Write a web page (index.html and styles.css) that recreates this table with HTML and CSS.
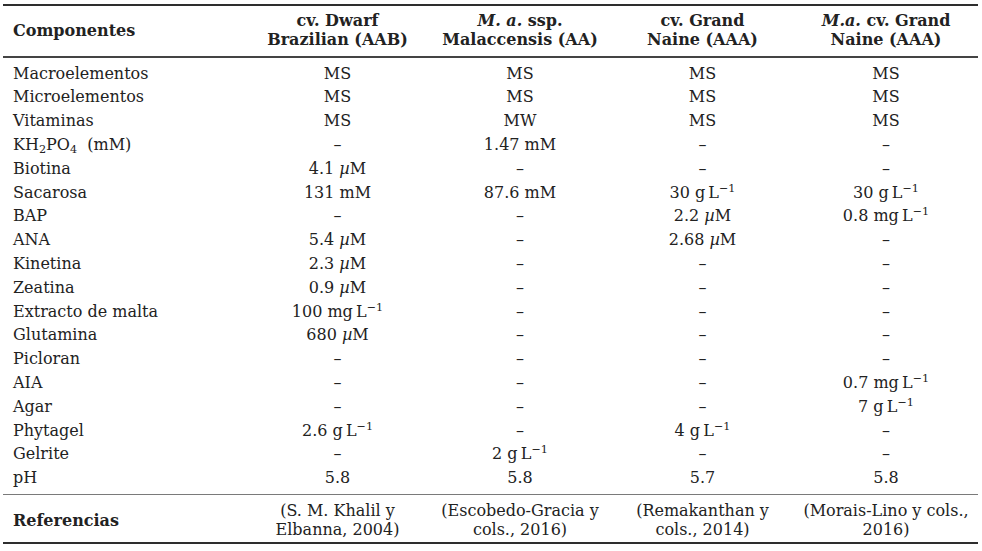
FILE: index.html
```html
<!DOCTYPE html>
<html lang="es">
<head>
<meta charset="utf-8">
<title>Componentes</title>
<link rel="stylesheet" href="styles.css">
</head>
<body>
<table class="tbl">
  <colgroup>
    <col class="c0"><col class="c1"><col class="c2"><col class="c3"><col class="c4">
  </colgroup>
  <thead>
    <tr>
      <th class="lbl">Componentes</th>
      <th>cv. Dwarf<br>Brazilian (AAB)</th>
      <th><i>M. a.</i> ssp.<br>Malaccensis (AA)</th>
      <th>cv. Grand<br>Naine (AAA)</th>
      <th><i>M.a.</i> cv. Grand<br>Naine (AAA)</th>
    </tr>
  </thead>
  <tbody>
    <tr class="first"><td class="lbl">Macroelementos</td><td>MS</td><td>MS</td><td>MS</td><td>MS</td></tr>
    <tr><td class="lbl">Microelementos</td><td>MS</td><td>MS</td><td>MS</td><td>MS</td></tr>
    <tr><td class="lbl">Vitaminas</td><td>MS</td><td>MW</td><td>MS</td><td>MS</td></tr>
    <tr><td class="lbl">KH<sub>2</sub>PO<sub>4</sub>&nbsp; (mM)</td><td>–</td><td>1.47 mM</td><td>–</td><td>–</td></tr>
    <tr><td class="lbl">Biotina</td><td>4.1 <i>µ</i>M</td><td>–</td><td>–</td><td>–</td></tr>
    <tr><td class="lbl">Sacarosa</td><td>131 mM</td><td>87.6 mM</td><td>30 g&#8201;L<sup>−1</sup></td><td>30 g&#8201;L<sup>−1</sup></td></tr>
    <tr><td class="lbl">BAP</td><td>–</td><td>–</td><td>2.2 <i>µ</i>M</td><td>0.8 mg&#8201;L<sup>−1</sup></td></tr>
    <tr><td class="lbl">ANA</td><td>5.4 <i>µ</i>M</td><td>–</td><td>2.68 <i>µ</i>M</td><td>–</td></tr>
    <tr><td class="lbl">Kinetina</td><td>2.3 <i>µ</i>M</td><td>–</td><td>–</td><td>–</td></tr>
    <tr><td class="lbl">Zeatina</td><td>0.9 <i>µ</i>M</td><td>–</td><td>–</td><td>–</td></tr>
    <tr><td class="lbl">Extracto de malta</td><td>100 mg&#8201;L<sup>−1</sup></td><td>–</td><td>–</td><td>–</td></tr>
    <tr><td class="lbl">Glutamina</td><td>680 <i>µ</i>M</td><td>–</td><td>–</td><td>–</td></tr>
    <tr><td class="lbl">Picloran</td><td>–</td><td>–</td><td>–</td><td>–</td></tr>
    <tr><td class="lbl">AIA</td><td>–</td><td>–</td><td>–</td><td>0.7 mg&#8201;L<sup>−1</sup></td></tr>
    <tr><td class="lbl">Agar</td><td>–</td><td>–</td><td>–</td><td>7 g&#8201;L<sup>−1</sup></td></tr>
    <tr><td class="lbl">Phytagel</td><td>2.6 g&#8201;L<sup>−1</sup></td><td>–</td><td>4 g&#8201;L<sup>−1</sup></td><td>–</td></tr>
    <tr><td class="lbl">Gelrite</td><td>–</td><td>2 g&#8201;L<sup>−1</sup></td><td>–</td><td>–</td></tr>
    <tr class="last"><td class="lbl">pH</td><td>5.8</td><td>5.8</td><td>5.7</td><td>5.8</td></tr>
  </tbody>
  <tfoot>
    <tr>
      <th class="lbl">Referencias</th>
      <td>(S. M. Khalil y<br>Elbanna, 2004)</td>
      <td>(Escobedo-Gracia y<br>cols., 2016)</td>
      <td>(Remakanthan y<br>cols., 2014)</td>
      <td>(Morais-Lino y cols.,<br>2016)</td>
    </tr>
  </tfoot>
</table>
</body>
</html>
```
FILE: styles.css
```css
html, body {
  margin: 0;
  padding: 0;
  background: #ffffff;
}

body {
  font-family: "DejaVu Serif", "Liberation Serif", serif;
  font-size: 16px;
  color: #222222;
}

.tbl {
  margin: 4px 0 0 3px;
  width: 975px;
  table-layout: fixed;
  border-collapse: separate;
  border-spacing: 0;
}

.c0 { width: 243px; }
.c1 { width: 183px; }
.c2 { width: 182px; }
.c3 { width: 183px; }
.c4 { width: 184px; }

.tbl th,
.tbl td {
  padding: 0;
  text-align: center;
  font-weight: normal;
  white-space: nowrap;
}

.tbl .lbl {
  text-align: left;
  padding-left: 10px;
}

.tbl thead th {
  font-weight: bold;
  line-height: 19.3px;
  padding-top: 5px;
  padding-bottom: 6px;
  border-top: 2px solid #2e2e2e;
  border-bottom: 2px solid #444444;
  vertical-align: middle;
}

.tbl tbody td {
  height: 23.8px;
  line-height: 23.8px;
}

.tbl tbody tr.first td { padding-top: 4px; }
.tbl tbody tr.last td { padding-bottom: 4px; }

.tbl tfoot th,
.tbl tfoot td {
  line-height: 19.4px;
  padding-top: 6px;
  padding-bottom: 2px;
  border-top: 1.5px solid #7a7a7a;
  border-bottom: 2px solid #2e2e2e;
  vertical-align: middle;
}

.tbl tfoot th {
  font-weight: bold;
  padding-left: 10px;
}

sub, sup {
  font-size: 0.7em;
  line-height: 0;
}

sub { vertical-align: -0.25em; }
sup { vertical-align: 0.5em; }
```
